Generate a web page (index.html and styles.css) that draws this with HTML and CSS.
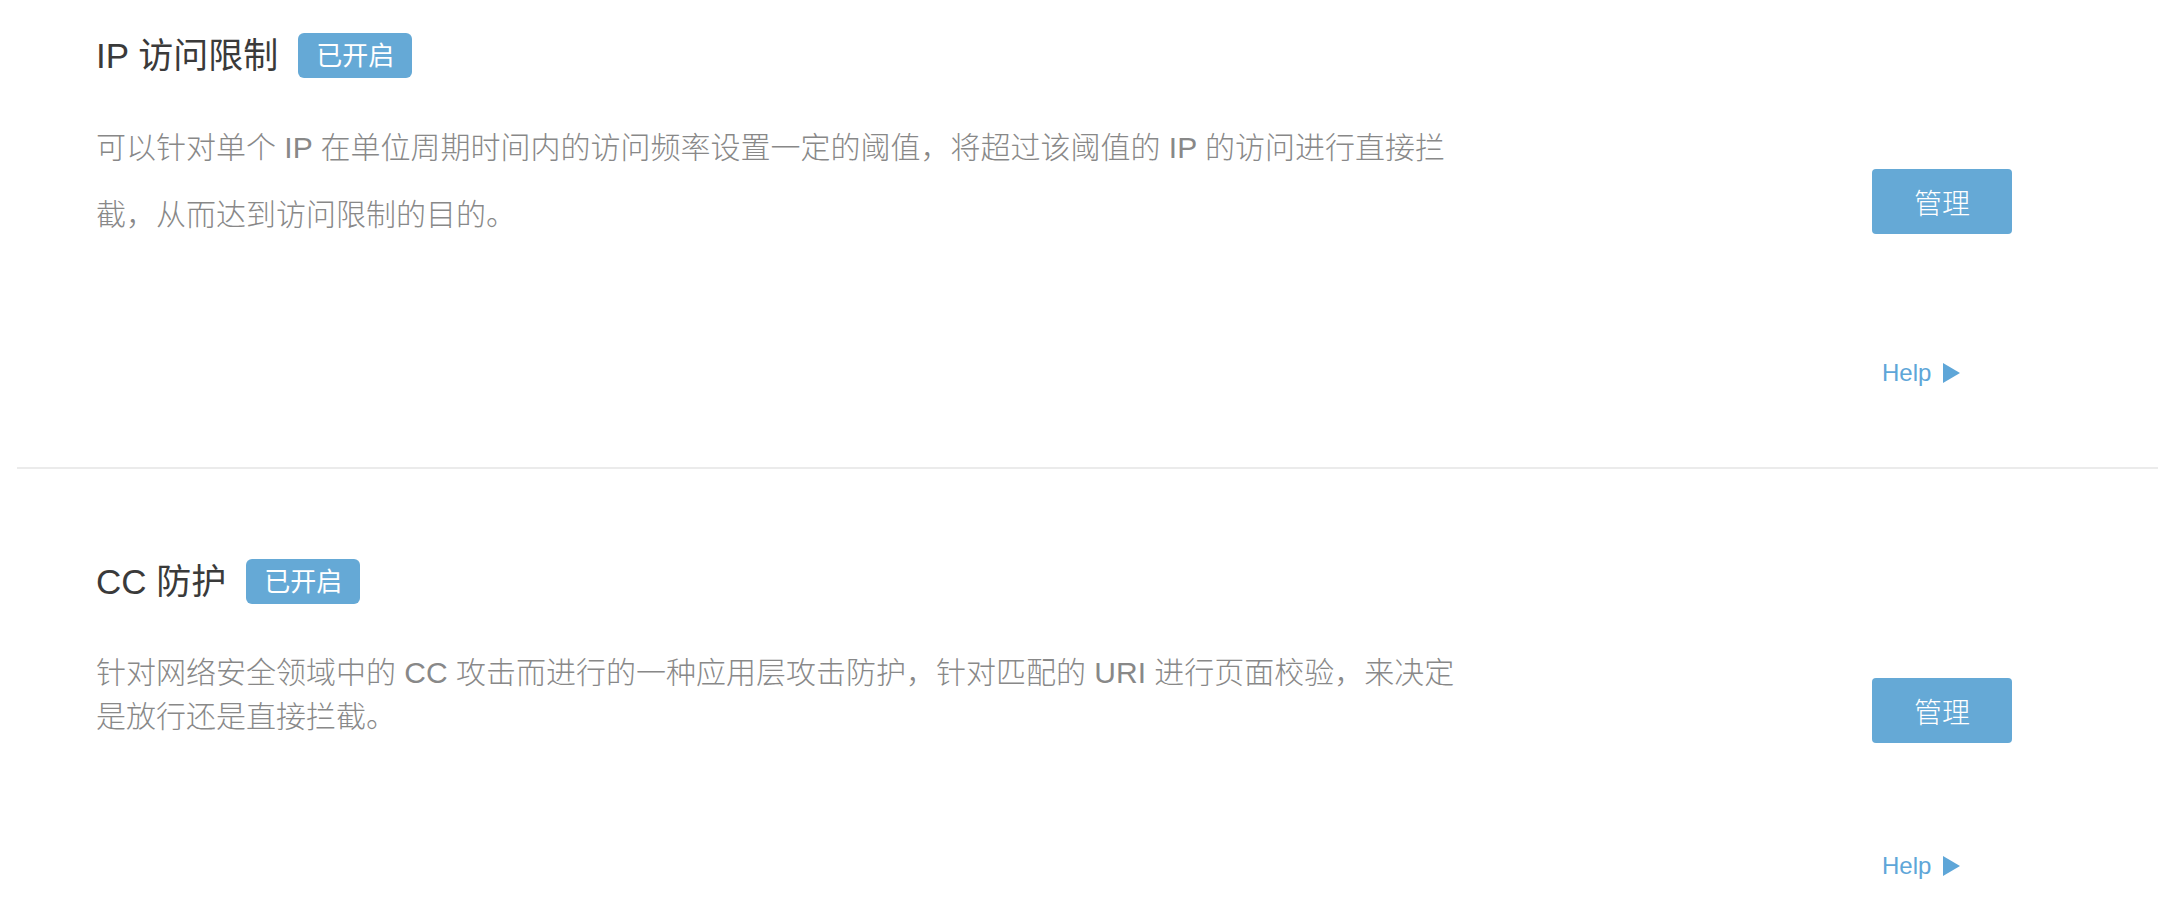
FILE: index.html
```html
<!DOCTYPE html>
<html lang="zh-CN">
<head>
<meta charset="utf-8">
<title>防护设置</title>
<link rel="stylesheet" href="styles.css">
</head>
<body>
<div class="list">
  <section class="item item--ip">
    <div class="main">
      <div class="title-row">
        <h2 class="title">IP 访问限制</h2>
        <span class="badge">已开启</span>
      </div>
      <p class="desc desc--loose">可以针对单个 IP 在单位周期时间内的访问频率设置一定的阈值，将超过该阈值的 IP 的访问进行直接拦截，从而达到访问限制的目的。</p>
    </div>
    <div class="side">
      <button class="btn" type="button">管理</button>
      <a class="help" href="#">Help <span class="tri"></span></a>
    </div>
  </section>
  <section class="item item--cc">
    <div class="main">
      <div class="title-row">
        <h2 class="title">CC 防护</h2>
        <span class="badge">已开启</span>
      </div>
      <p class="desc">针对网络安全领域中的 CC 攻击而进行的一种应用层攻击防护，针对匹配的 URI 进行页面校验，来决定是放行还是直接拦截。</p>
    </div>
    <div class="side">
      <button class="btn" type="button">管理</button>
      <a class="help" href="#">Help <span class="tri"></span></a>
    </div>
  </section>
</div>
</body>
</html>
```

FILE: styles.css
```css
html, body {
  margin: 0;
  padding: 0;
  background: #ffffff;
}

body {
  font-family: "Liberation Sans", "Noto Sans CJK SC", sans-serif;
  color: #333333;
}

.list {
  padding-left: 17px;
}

.item {
  display: flex;
  align-items: flex-start;
  padding-left: 79px;
}

.item--ip {
  height: 469px;
  border-bottom: 2px solid #ebebeb;
  box-sizing: border-box;
  padding-top: 33px;
}

.item--cc {
  padding-top: 90px;
  height: 449px;
  box-sizing: border-box;
}

.main {
  flex: 1;
  min-width: 0;
}

.title-row {
  display: flex;
  align-items: center;
  height: 45px;
  gap: 20px;
}

.title {
  margin: 0;
  font-size: 35px;
  font-weight: 400;
  color: #3a3a3a;
  line-height: 45px;
}

.badge {
  display: inline-flex;
  align-items: center;
  height: 45px;
  padding: 0 18px;
  border-radius: 6px;
  background: #65a9d6;
  color: #ffffff;
  font-size: 26px;
  line-height: 1;
}

.desc {
  margin: 47px 0 0;
  width: 1370px;
  font-size: 30px;
  font-weight: 300;
  line-height: 44px;
  color: #888888;
}

.desc--loose {
  margin-top: 36px;
  line-height: 67px;
}

.side {
  width: 140px;
  margin-right: 146px;
  display: flex;
  flex-direction: column;
  align-items: flex-start;
}

.item--ip .side {
  margin-top: 136px;
}

.item--ip .help {
  margin-top: 124px;
}

.item--cc .side {
  margin-top: 119px;
}

.item--cc .help {
  margin-top: 108px;
}

.btn {
  width: 140px;
  height: 65px;
  border: 0;
  border-radius: 4px;
  background: #65a9d6;
  color: #ffffff;
  font-family: "Liberation Sans", "Noto Sans CJK SC", sans-serif;
  font-size: 28px;
  font-weight: 300;
  padding: 0;
  cursor: pointer;
}

.help {
  display: inline-flex;
  align-items: center;
  gap: 12px;
  height: 30px;
  padding-left: 10px;
  font-size: 24px;
  color: #5ea6d8;
  text-decoration: none;
}

.tri {
  width: 0;
  height: 0;
  border-left: 17px solid #5ea6d8;
  border-top: 10px solid transparent;
  border-bottom: 10px solid transparent;
}
```
